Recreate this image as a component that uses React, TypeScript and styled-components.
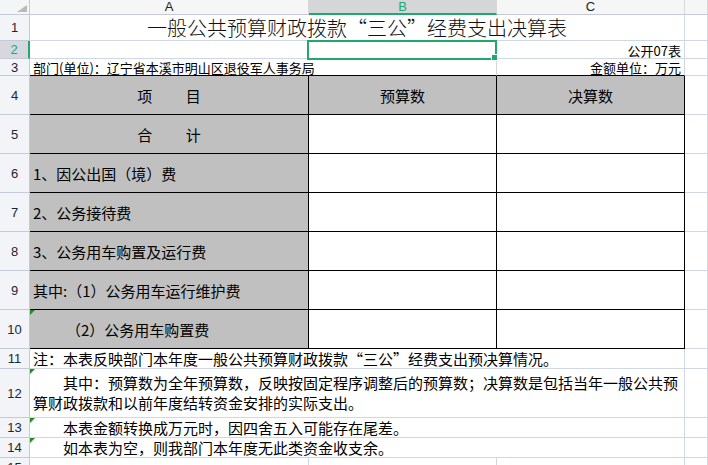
import React from "react";
import styled, { createGlobalStyle, css } from "styled-components";

const GRID = "#d0d7e5";
const HEAD_LINE = "#c5cad6";
const GREEN = "#21a96d";
const CJK = `"Noto Sans CJK SC", "Noto Sans", sans-serif`;

const Global = createGlobalStyle`
  html, body { margin: 0; padding: 0; background: #fff; overflow: hidden; }
  body { font-family: ${CJK}; color: #000; }
`;

const Sheet = styled.div`
  display: grid;
  grid-template-columns: 30px 279px 188px 188px 1fr;
  grid-template-rows: 15px 26px 18px 17px repeat(7, 39px) 20px 49px 20px 20px 20px;
  width: 708px;
  height: 465px;
  overflow: hidden;
`;

const Corner = styled.div`
  position: relative;
  box-sizing: border-box;
  background: #f4f5f7;
  border-right: 1px solid ${HEAD_LINE};
  border-bottom: 1px solid ${HEAD_LINE};
  display: flex;
  align-items: flex-end;
  justify-content: flex-end;
  padding: 0 2px 2px 0;
`;

const ColHeader = styled.div<{ $on?: boolean }>`
  box-sizing: border-box;
  display: flex;
  align-items: center;
  justify-content: center;
  font-family: "Liberation Sans", Arial, sans-serif;
  font-size: 13px;
  line-height: 14px;
  color: ${(p) => (p.$on ? GREEN : "#222")};
  background: ${(p) => (p.$on ? "#d5d6d8" : "#f6f6f6")};
  border-right: 1px solid #d8d8d8;
  border-bottom: ${(p) => (p.$on ? `2px solid ${GREEN}` : `1px solid ${HEAD_LINE}`)};
`;

const RowHeader = styled.div<{ $on?: boolean }>`
  box-sizing: border-box;
  display: flex;
  align-items: center;
  justify-content: center;
  font-family: "Liberation Sans", Arial, sans-serif;
  font-size: 13px;
  color: ${(p) => (p.$on ? GREEN : "#1c2536")};
  background: ${(p) => (p.$on ? "#d6d8dd" : "#f2f4f7")};
  border-right: ${(p) => (p.$on ? `2px solid ${GREEN}` : `1px solid ${HEAD_LINE}`)};
  border-bottom: 1px solid ${HEAD_LINE};
`;

type CellProps = {
  $span?: number;
  $gray?: boolean;
  $box?: boolean;
  $rule?: boolean;
  $align?: "flex-start" | "center" | "flex-end";
  $valign?: "flex-start" | "center" | "flex-end";
  $size?: number;
  $indent?: number;
  $flag?: boolean;
};

const Cell = styled.div<CellProps>`
  position: relative;
  box-sizing: border-box;
  grid-column: span ${(p) => p.$span ?? 1};
  background: ${(p) => (p.$gray ? "#c0c0c0" : "#fff")};
  border-right: 1px solid ${(p) => (p.$box ? "#000" : GRID)};
  border-bottom: 1px solid ${(p) => (p.$box || p.$rule ? "#000" : GRID)};
  display: flex;
  align-items: ${(p) => p.$valign ?? "center"};
  justify-content: ${(p) => p.$align ?? "flex-start"};
  padding: 0 3px 0 ${(p) => 3 + (p.$indent ?? 0)}px;
  font-size: ${(p) => p.$size ?? 15}px;
  line-height: 19px;
  white-space: pre;
  ${(p) =>
    p.$flag &&
    css`
      &::before {
        content: "";
        position: absolute;
        left: 0;
        top: 0;
        border-top: 5px solid #1f8f1f;
        border-right: 5px solid transparent;
      }
    `}
`;

const Title = styled.span`
  font-size: 20px;
  line-height: 24px;
  font-weight: 300;
  color: #111;
`;

const Small = styled.span`
  font-size: 13px;
  line-height: 15px;
`;

const Selection = styled.div`
  position: absolute;
  left: -2px;
  top: -1px;
  width: 190px;
  height: 20px;
  box-sizing: border-box;
  border: 2px solid ${GREEN};
  z-index: 2;
  pointer-events: none;
`;

const Handle = styled.div`
  position: absolute;
  right: -3px;
  bottom: -3px;
  width: 7px;
  height: 7px;
  box-sizing: border-box;
  background: ${GREEN};
  border: 1px solid #fff;
`;

const Para = styled.div`
  font-size: 15px;
  line-height: 20px;
`;

const rows = [
  { n: 4, label: "项　　 目", center: true, head: true },
  { n: 5, label: "合　　 计", center: true },
  { n: 6, label: "1、因公出国（境）费" },
  { n: 7, label: "2、公务接待费" },
  { n: 8, label: "3、公务用车购置及运行费" },
  { n: 9, label: "其中:（1）公务用车运行维护费" },
  { n: 10, label: "（2）公务用车购置费", indent: 33, flag: true },
];

export default function App() {
  return (
    <>
      <Global />
      <Sheet>
        <Corner>
          <svg width="10" height="7" viewBox="0 0 10 7">
            <polygon points="10,0 10,7 0,7" fill="#b9b9b9" />
          </svg>
        </Corner>
        <ColHeader>A</ColHeader>
        <ColHeader $on>B</ColHeader>
        <ColHeader>C</ColHeader>
        <ColHeader />

        <RowHeader>1</RowHeader>
        <Cell $span={3} $align="center" $valign="flex-end">
          <Title>一般公共预算财政拨款“三公”经费支出决算表</Title>
        </Cell>
        <Cell />

        <RowHeader $on>2</RowHeader>
        <Cell />
        <Cell>
          <Selection>
            <Handle />
          </Selection>
        </Cell>
        <Cell $align="flex-end" $valign="flex-end">
          <Small>公开07表</Small>
        </Cell>
        <Cell />

        <RowHeader>3</RowHeader>
        <Cell $span={2} $rule $valign="flex-end">
          <Small>部门(单位)：辽宁省本溪市明山区退役军人事务局</Small>
        </Cell>
        <Cell $rule $align="flex-end" $valign="flex-end">
          <Small>金额单位：万元</Small>
        </Cell>
        <Cell />

        {rows.map((r) => (
          <React.Fragment key={r.n}>
            <RowHeader>{r.n}</RowHeader>
            <Cell
              $gray
              $box
              $align={r.center ? "center" : "flex-start"}
              $indent={r.indent}
              $flag={r.flag}
            >
              {r.label}
            </Cell>
            <Cell $box $gray={r.head} $align="center">
              {r.head ? "预算数" : ""}
            </Cell>
            <Cell $box $gray={r.head} $align="center">
              {r.head ? "决算数" : ""}
            </Cell>
            <Cell />
          </React.Fragment>
        ))}

        <RowHeader>11</RowHeader>
        <Cell $span={3}>注：本表反映部门本年度一般公共预算财政拨款“三公”经费支出预决算情况。</Cell>
        <Cell />

        <RowHeader>12</RowHeader>
        <Cell $span={3} $flag>
          <Para>
            {"　　其中：预算数为全年预算数，反映按固定程序调整后的预算数；决算数是包括当年一般公共预"}
            <br />
            {"算财政拨款和以前年度结转资金安排的实际支出。"}
          </Para>
        </Cell>
        <Cell />

        <RowHeader>13</RowHeader>
        <Cell $span={3} $flag $valign="flex-end">
          {"　　本表金额转换成万元时，因四舍五入可能存在尾差。"}
        </Cell>
        <Cell />

        <RowHeader>14</RowHeader>
        <Cell $span={3} $flag $valign="flex-end">
          {"　　如本表为空，则我部门本年度无此类资金收支余。"}
        </Cell>
        <Cell />

        <RowHeader>15</RowHeader>
        <Cell />
        <Cell />
        <Cell />
        <Cell />
      </Sheet>
    </>
  );
}
